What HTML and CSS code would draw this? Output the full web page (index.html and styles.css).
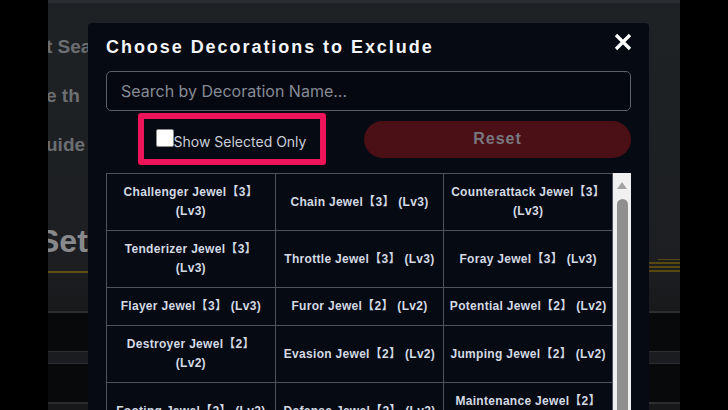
FILE: index.html
```html
<!DOCTYPE html>
<html lang="en">
<head>
<meta charset="utf-8">
<title>Choose Decorations to Exclude</title>
<link rel="stylesheet" href="styles.css">
</head>
<body>
<div class="frame">
  <div class="page">
    <div class="page-top"></div>
    <div class="hero">
      <div class="hero-text">
        <p class="bg-line">t Sea</p>
        <p class="bg-line">e th</p>
        <p class="bg-line">uide</p>
        <h2 class="bg-title">Set</h2>
        <div class="bg-underline"></div>
      </div>
      <div class="bars">
        <span class="bar short"></span>
        <span class="bar"></span>
        <span class="bar"></span>
        <span class="bar"></span>
      </div>
    </div>
    <div class="sep"></div>
    <div class="dark d1"></div>
    <div class="band"></div>
    <div class="dark d2"></div>
    <div class="sep"></div>
  </div>

  <div class="modal">
    <div class="modal-head">
      <h1 class="modal-title">Choose Decorations to Exclude</h1>
      <button class="close" aria-label="Close">
        <svg width="18" height="18" viewBox="0 0 18 18"><path d="M2 2 L16 16 M16 2 L2 16" stroke="#ffffff" stroke-width="3.3" stroke-linecap="butt" fill="none"/></svg>
      </button>
    </div>
    <input class="search" type="text" placeholder="Search by Decoration Name...">
    <div class="controls">
      <label class="only">
        <input class="cb" type="checkbox"><span class="only-text">Show Selected Only</span>
      </label>
      <button class="reset">Reset</button>
    </div>
    <div class="list">
      <table class="deco">
        <tr>
          <td>Challenger Jewel【3】 (Lv3)</td>
          <td>Chain Jewel【3】 (Lv3)</td>
          <td>Counterattack Jewel【3】 (Lv3)</td>
        </tr>
        <tr>
          <td>Tenderizer Jewel【3】 (Lv3)</td>
          <td>Throttle Jewel【3】 (Lv3)</td>
          <td>Foray Jewel【3】 (Lv3)</td>
        </tr>
        <tr>
          <td>Flayer Jewel【3】 (Lv3)</td>
          <td>Furor Jewel【2】 (Lv2)</td>
          <td>Potential Jewel【2】 (Lv2)</td>
        </tr>
        <tr>
          <td>Destroyer Jewel【2】 (Lv2)</td>
          <td>Evasion Jewel【2】 (Lv2)</td>
          <td>Jumping Jewel【2】 (Lv2)</td>
        </tr>
        <tr>
          <td>Footing Jewel【2】 (Lv2)</td>
          <td>Defense Jewel【2】 (Lv2)</td>
          <td>Maintenance Jewel【2】 (Lv2)</td>
        </tr>
      </table>
      <div class="scrollbar">
        <span class="sb-arrow"></span>
        <span class="sb-thumb"></span>
      </div>
    </div>
  </div>
</div>
</body>
</html>
```

FILE: styles.css
```css
html, body {
  margin: 0;
  padding: 0;
  background: #000000;
  overflow: hidden;
}

.frame {
  position: relative;
  width: 632px;
  height: 410px;
  margin: 0 auto;
  overflow: hidden;
  background: #16181a;
}

/* ---------- dimmed page behind the dialog ---------- */
.page-top {
  height: 3px;
  background: #2a2d31;
}

.hero {
  height: 308px;
  display: flex;
  justify-content: space-between;
  background: linear-gradient(180deg, #1f2225 0%, #1c1e21 85%, #17191b 100%);
}

.hero-text {
  width: 320px;
  padding-top: 34px;
}

.bg-line {
  margin: 0 0 29px -2px;
  font: bold 19px/20px "Liberation Sans", Arial, sans-serif;
  color: #6c6e72;
  white-space: nowrap;
}

.bg-title {
  margin: 66px 0 0 -10px;
  font: bold 32px/40px "Liberation Sans", Arial, sans-serif;
  color: #88898c;
  white-space: nowrap;
}

.bg-underline {
  margin-top: 10px;
  height: 2px;
  background: #5e4f12;
}

.bars {
  align-self: flex-end;
  margin-bottom: 39px;
  width: 31px;
  display: flex;
  flex-direction: column;
  align-items: flex-end;
  gap: 2px;
}

.bar {
  display: block;
  width: 31px;
  height: 2px;
  background: #574810;
}

.bar.short {
  width: 22px;
  height: 1px;
}

.sep {
  height: 2px;
  background: #2b2d30;
}

.dark {
  background: #08090b;
}

.d1 { height: 38px; }
.d2 { height: 38px; }

.band {
  height: 11px;
  background: #1a1c1f;
  border-top: 1px solid #2d2f32;
  border-bottom: 1px solid #2d2f32;
}

/* ---------- dialog ---------- */
.modal {
  position: absolute;
  left: 40px;
  top: 23px;
  width: 561px;
  height: 420px;
  box-sizing: border-box;
  padding: 12px 18px 0;
  background: #060a13;
  border-radius: 4px;
}

.modal-head {
  display: flex;
  justify-content: space-between;
  align-items: flex-start;
  height: 24px;
}

.modal-title {
  margin: 0;
  font: bold 18px/24px "Liberation Sans", Arial, sans-serif;
  letter-spacing: 1.95px;
  color: #f3f5f9;
  white-space: nowrap;
}

.close {
  margin: -2px -1px 0 0;
  padding: 0;
  border: 0;
  background: none;
  width: 18px;
  height: 18px;
  display: block;
  cursor: pointer;
}

.close svg {
  display: block;
}

.search {
  display: block;
  margin-top: 12px;
  width: 100%;
  height: 40px;
  box-sizing: border-box;
  padding: 0 14px;
  border: 1px solid #5b606a;
  border-radius: 5px;
  background: #050811;
  font: 16px "Inter", "Liberation Sans", sans-serif;
  color: #d0d4dc;
  outline: none;
}

.search::placeholder {
  color: #868b95;
}

.controls {
  margin-top: 2px;
  display: grid;
  grid-template-columns: 1fr 267px;
  column-gap: 6px;
  align-items: center;
}

.only {
  justify-self: center;
  display: flex;
  align-items: baseline;
  padding: 10px 14px 10px 12px;
  border: 6px solid #ee1459;
  border-radius: 3px;
}

.cb {
  -webkit-appearance: none;
  appearance: none;
  margin: 0;
  width: 18px;
  height: 18px;
  box-sizing: border-box;
  background: #ffffff;
  border: 1px solid #8b8b8b;
  border-radius: 2px;
}

.only-text {
  font: 14px/14px "Inter", "Liberation Sans", sans-serif;
  color: #c9ced7;
  white-space: nowrap;
}

.reset {
  height: 37px;
  border: 0;
  border-radius: 19px;
  background: #4b1016;
  color: #78797e;
  font: bold 16px "Liberation Sans", Arial, sans-serif;
  letter-spacing: 1px;
  padding: 0;
}

.list {
  margin-top: 8px;
  display: flex;
  align-items: stretch;
}

.deco {
  width: 507px;
  table-layout: fixed;
  border-collapse: collapse;
  align-self: flex-start;
}

.deco td {
  padding: 9px 4px;
  border: 1px solid #4e535d;
  text-align: center;
  vertical-align: middle;
  font: bold 12px/19px "Liberation Sans", "Noto Sans CJK JP", sans-serif;
  letter-spacing: 0.3px;
  color: #d4dae4;
}

.scrollbar {
  width: 18px;
  background: #f1f1f1;
  display: flex;
  flex-direction: column;
  align-items: center;
}

.sb-arrow {
  display: block;
  margin-top: 9px;
  width: 0;
  height: 0;
  border-left: 5px solid transparent;
  border-right: 5px solid transparent;
  border-bottom: 7px solid #a3a3a3;
}

.sb-thumb {
  display: block;
  margin-top: 10px;
  width: 11px;
  flex: 1;
  background: #8f8f8f;
  border-radius: 6px 6px 0 0;
}
```
